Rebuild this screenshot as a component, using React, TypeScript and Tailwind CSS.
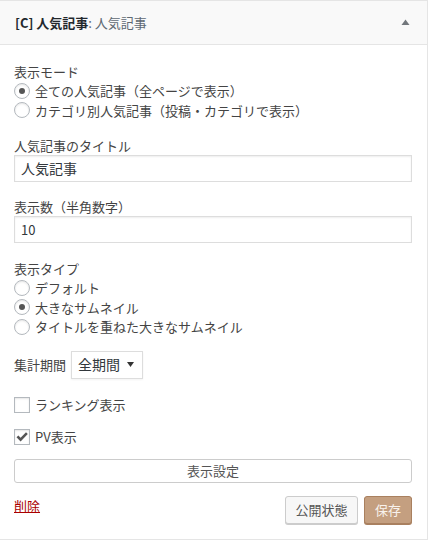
import React from "react";

const font = { fontFamily: '"Noto Sans CJK JP", "Noto Sans", sans-serif' };

function Radio({ checked, label }: { checked?: boolean; label: string }) {
  return (
    <div className="flex items-center h-[19.5px]">
      <span className="w-[16px] h-[16px] rounded-full border border-[#b4b9be] bg-white shadow-[inset_0_1px_2px_rgba(0,0,0,0.1)] flex items-center justify-center shrink-0">
        {checked && <span className="w-[6px] h-[6px] rounded-full bg-[#555]" />}
      </span>
      <span className="ml-[5px] leading-[19px]">{label}</span>
    </div>
  );
}

function Checkbox({ checked, label }: { checked?: boolean; label: string }) {
  return (
    <div className="flex items-center h-[16px]">
      <span className="w-[16px] h-[16px] border border-[#b4b9be] bg-white shadow-[inset_0_1px_2px_rgba(0,0,0,0.1)] flex items-center justify-center shrink-0">
        {checked && (
          <svg width="14" height="14" viewBox="0 0 14 14">
            <path d="M1.5 7.2 L3.4 5.4 L5.6 7.8 L11 2.2 L12.8 4 L5.6 11.4 Z" fill="#555" />
          </svg>
        )}
      </span>
      <span className="ml-[5px] leading-[19px]">{label}</span>
    </div>
  );
}

export default function App() {
  return (
    <div className="w-[430px] h-[541px] bg-white text-[13px] text-[#444]" style={font}>
      <div className="w-[428px] h-[540px] border-t border-r border-b border-[#e5e5e5] bg-white flex flex-col">
        <div className="h-[44px] bg-[#f9f9f9] border-b border-[#e5e5e5] flex items-center justify-between pl-[15px] pr-[17px] shrink-0">
          <div className="leading-[19px]">
            <span className="font-semibold text-[#23282d]">[C] 人気記事</span>
            <span className="text-[#606a73]">: 人気記事</span>
          </div>
          <svg width="9" height="6" viewBox="0 0 9 6" className="mt-[-2px]">
            <path d="M0.5 6 L4.5 0.5 L8.5 6 Z" fill="#72777c" />
          </svg>
        </div>
        <div className="pl-[14px] pr-[15px] flex flex-col">
          <div className="mt-[17px] h-[19px] leading-[19px]">表示モード</div>
          <Radio checked label="全ての人気記事（全ページで表示）" />
          <Radio label="カテゴリ別人気記事（投稿・カテゴリで表示）" />

          <div className="mt-[17px] h-[18px] leading-[18px]">人気記事のタイトル</div>
          <div className="h-[27px] border border-[#ddd] shadow-[inset_0_1px_2px_rgba(0,0,0,0.07)] flex items-center pl-[6px] text-[#32373c] text-[14px]">
            人気記事
          </div>

          <div className="mt-[16px] h-[18px] leading-[18px]">表示数（半角数字）</div>
          <div className="h-[27px] border border-[#ddd] shadow-[inset_0_1px_2px_rgba(0,0,0,0.07)] flex items-center pl-[6px] text-[#32373c]">
            10
          </div>

          <div className="mt-[17px] h-[18px] leading-[18px]">表示タイプ</div>
          <Radio label="デフォルト" />
          <Radio checked label="大きなサムネイル" />
          <Radio label="タイトルを重ねた大きなサムネイル" />

          <div className="mt-[14px] h-[28px] flex items-center">
            <span className="leading-[19px]">集計期間</span>
            <div className="ml-[5px] w-[72px] h-[28px] border border-[#ddd] shadow-[0_1px_2px_rgba(0,0,0,0.05)] flex items-center justify-between pl-[6px] pr-[8px] text-[#32373c] text-[14px]">
              <span>全期間</span>
              <svg width="7" height="5" viewBox="0 0 7 5">
                <path d="M0 0 L7 0 L3.5 5 Z" fill="#333" />
              </svg>
            </div>
          </div>

          <div className="mt-[18px]">
            <Checkbox label="ランキング表示" />
          </div>
          <div className="mt-[16px]">
            <Checkbox checked label="PV表示" />
          </div>

          <div className="mt-[14px] h-[24px] border border-[#ccc] rounded-[3px] bg-white flex items-center justify-center text-[#555]">
            表示設定
          </div>

          <div className="mt-[13px] h-[28px] flex items-start justify-between">
            <a className="text-[#a00] underline leading-[19px] mt-[0px]">削除</a>
            <div className="flex gap-[6px]">
              <div className="w-[73px] h-[28px] border border-[#ccc] rounded-[3px] bg-[#f7f7f7] shadow-[0_1px_0_#ccc] flex items-center justify-center text-[#555]">
                公開状態
              </div>
              <div className="w-[48px] h-[28px] border border-[#a9805f] rounded-[3px] bg-[#c49f80] shadow-[0_1px_0_#a9805f] flex items-center justify-center text-[#f8f2ec]">
                保存
              </div>
            </div>
          </div>
        </div>
      </div>
    </div>
  );
}
